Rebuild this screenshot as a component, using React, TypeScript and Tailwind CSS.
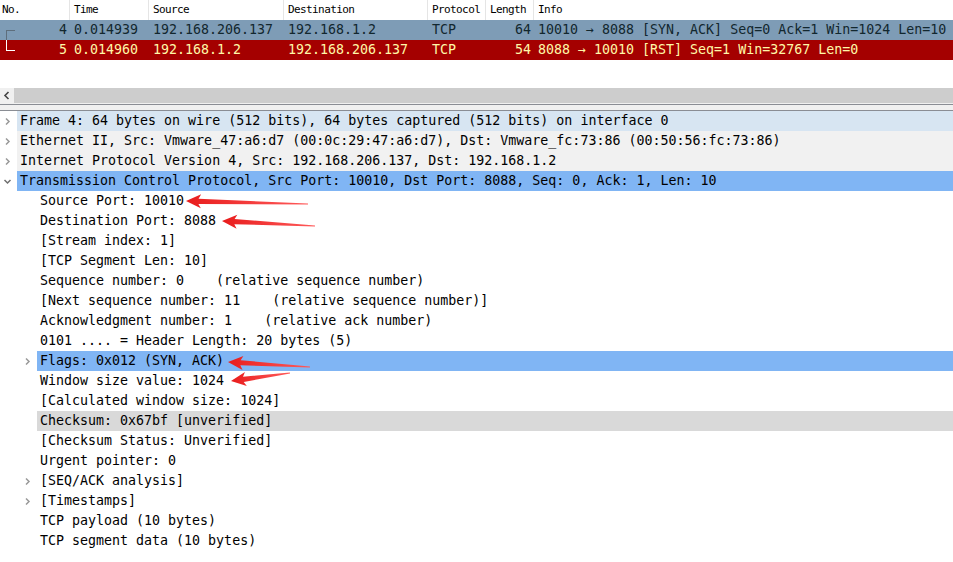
import React from "react";

const mono = "font-['DejaVu_Sans_Mono','Liberation_Mono',monospace]";

type Node = {
  text: string;
  level: 0 | 1;
  toggle?: "closed" | "open";
  bg?: string;
};

const details: Node[] = [
  { text: "Frame 4: 64 bytes on wire (512 bits), 64 bytes captured (512 bits) on interface 0", level: 0, toggle: "closed", bg: "bg-[#d7e5f2]" },
  { text: "Ethernet II, Src: Vmware_47:a6:d7 (00:0c:29:47:a6:d7), Dst: Vmware_fc:73:86 (00:50:56:fc:73:86)", level: 0, toggle: "closed", bg: "bg-[#f1f1f1]" },
  { text: "Internet Protocol Version 4, Src: 192.168.206.137, Dst: 192.168.1.2", level: 0, toggle: "closed", bg: "bg-[#f1f1f1]" },
  { text: "Transmission Control Protocol, Src Port: 10010, Dst Port: 8088, Seq: 0, Ack: 1, Len: 10", level: 0, toggle: "open", bg: "bg-[#80b5f4]" },
  { text: "Source Port: 10010", level: 1 },
  { text: "Destination Port: 8088", level: 1 },
  { text: "[Stream index: 1]", level: 1 },
  { text: "[TCP Segment Len: 10]", level: 1 },
  { text: "Sequence number: 0    (relative sequence number)", level: 1 },
  { text: "[Next sequence number: 11    (relative sequence number)]", level: 1 },
  { text: "Acknowledgment number: 1    (relative ack number)", level: 1 },
  { text: "0101 .... = Header Length: 20 bytes (5)", level: 1 },
  { text: "Flags: 0x012 (SYN, ACK)", level: 1, toggle: "closed", bg: "bg-[#80b5f4]" },
  { text: "Window size value: 1024", level: 1 },
  { text: "[Calculated window size: 1024]", level: 1 },
  { text: "Checksum: 0x67bf [unverified]", level: 1, bg: "bg-[#d9d9d9]" },
  { text: "[Checksum Status: Unverified]", level: 1 },
  { text: "Urgent pointer: 0", level: 1 },
  { text: "[SEQ/ACK analysis]", level: 1, toggle: "closed" },
  { text: "[Timestamps]", level: 1, toggle: "closed" },
  { text: "TCP payload (10 bytes)", level: 1 },
  { text: "TCP segment data (10 bytes)", level: 1 },
];

function Chevron({ open }: { open: boolean }) {
  return (
    <svg width="9" height="9" viewBox="0 0 9 9" className="shrink-0">
      {open ? (
        <path d="M1.5 3 L4.5 6 L7.5 3" fill="none" stroke="#6f6f6f" strokeWidth="1.5" />
      ) : (
        <path d="M3 1.5 L6 4.5 L3 7.5" fill="none" stroke="#999" strokeWidth="1.5" />
      )}
    </svg>
  );
}

function DetailRow({ n }: { n: Node }) {
  const indent = n.level === 0 ? "w-[17px]" : "w-[37px]";
  return (
    <div className="flex h-5 items-center">
      <div className={`${indent} h-5 flex items-center justify-end pr-[5px] bg-white shrink-0`}>
        {n.toggle && <Chevron open={n.toggle === "open"} />}
      </div>
      <div className={`flex-1 h-5 flex items-center pl-[3px] whitespace-pre text-black ${n.bg ?? ""}`}>
        {n.text}
      </div>
    </div>
  );
}

function Arrow({ x1, y1, x2, y2 }: { x1: number; y1: number; x2: number; y2: number }) {
  // x1,y1 = head tip ; x2,y2 = tail end
  const dx = x2 - x1;
  const dy = y2 - y1;
  const len = Math.sqrt(dx * dx + dy * dy);
  const ang = (Math.atan2(dy, dx) * 180) / Math.PI;
  return (
    <g transform={`translate(${x1} ${y1}) rotate(${ang})`}>
      <path
        d={`M0 0 L15 -7 L12.5 -2.6 L${len} -0.5 L${len} 0.5 L12.5 2.6 L15 7 Z`}
        fill="url(#arrowGrad)"
      />
    </g>
  );
}

export default function App() {
  return (
    <div className={`relative w-[953px] h-[562px] overflow-hidden bg-white ${mono} text-[13.3px] leading-5`}>
      {/* packet list header */}
      <div className="flex h-5 items-center text-[11px] tracking-[-0.6px] text-black">
        <div className="w-[70px] pl-[2px] border-r border-[#e5e5e5] h-5 flex items-center">No.</div>
        <div className="w-[79px] pl-[4px] border-r border-[#e5e5e5] h-5 flex items-center">Time</div>
        <div className="w-[135px] pl-[4px] border-r border-[#e5e5e5] h-5 flex items-center">Source</div>
        <div className="w-[144px] pl-[4px] border-r border-[#e5e5e5] h-5 flex items-center">Destination</div>
        <div className="w-[58px] pl-[4px] border-r border-[#e5e5e5] h-5 flex items-center">Protocol</div>
        <div className="w-[48px] pl-[4px] border-r border-[#e5e5e5] h-5 flex items-center">Length</div>
        <div className="flex-1 pl-[4px] h-5 flex items-center">Info</div>
      </div>

      {/* packet rows */}
      <div className="flex h-5 items-center bg-[#7e9cb6] text-[#12272e] whitespace-pre">
        <div className="w-[70px] relative h-5 flex items-center justify-end pr-[3px]">
          <span className="absolute left-[6px] top-[10px] w-[9px] h-[10px] border-l border-t border-[#5e6e7c]" />
          4
        </div>
        <div className="w-[79px] pl-[4px]">0.014939</div>
        <div className="w-[135px] pl-[4px]">192.168.206.137</div>
        <div className="w-[144px] pl-[4px]">192.168.1.2</div>
        <div className="w-[58px] pl-[4px]">TCP</div>
        <div className="w-[48px] text-right pr-[3px]">64</div>
        <div className="flex-1 pl-[4px]">10010 → 8088 [SYN, ACK] Seq=0 Ack=1 Win=1024 Len=10</div>
      </div>
      <div className="flex h-5 items-center bg-[#a40000] text-[#fff8a8] whitespace-pre">
        <div className="w-[70px] relative h-5 flex items-center justify-end pr-[3px]">
          <span className="absolute left-[6px] top-0 w-[9px] h-[11px] border-l border-b border-white" />
          5
        </div>
        <div className="w-[79px] pl-[4px]">0.014960</div>
        <div className="w-[135px] pl-[4px]">192.168.1.2</div>
        <div className="w-[144px] pl-[4px]">192.168.206.137</div>
        <div className="w-[58px] pl-[4px]">TCP</div>
        <div className="w-[48px] text-right pr-[3px]">54</div>
        <div className="flex-1 pl-[4px]">8088 → 10010 [RST] Seq=1 Win=32767 Len=0</div>
      </div>

      <div className="h-[28px]" />

      {/* horizontal scrollbar */}
      <div className="flex h-[15px]">
        <div className="w-[14px] bg-[#f0f0f0] flex items-center justify-center">
          <svg width="8" height="9" viewBox="0 0 8 9">
            <path d="M5.5 1 L2 4.5 L5.5 8" fill="none" stroke="#444" strokeWidth="1.6" />
          </svg>
        </div>
        <div className="flex-1 bg-[#cdcdcd]" />
      </div>

      {/* splitter */}
      <div className="h-[1px] bg-[#f0f0f0]" />
      <div className="h-[1px] bg-[#8a8d94]" />
      <div className="h-[5px] bg-[#f0f0f0]" />
      <div className="h-[1px] bg-[#8a8d94]" />

      {/* packet details */}
      <div className="text-black">
        {details.map((n, i) => (
          <DetailRow key={i} n={n} />
        ))}
      </div>

      {/* annotation arrows */}
      <svg className="absolute left-0 top-0 pointer-events-none" width="953" height="562">
        <defs>
          <linearGradient id="arrowGrad" x1="0" y1="0" x2="1" y2="0">
            <stop offset="0" stopColor="#e81c1c" />
            <stop offset="1" stopColor="#ff5a5a" />
          </linearGradient>
        </defs>
        <Arrow x1={186} y1={201} x2={308} y2={204} />
        <Arrow x1={222} y1={221} x2={315} y2={226} />
        <Arrow x1={228} y1={362} x2={310} y2={367} />
        <Arrow x1={231} y1={381} x2={290} y2={373} />
      </svg>
    </div>
  );
}
